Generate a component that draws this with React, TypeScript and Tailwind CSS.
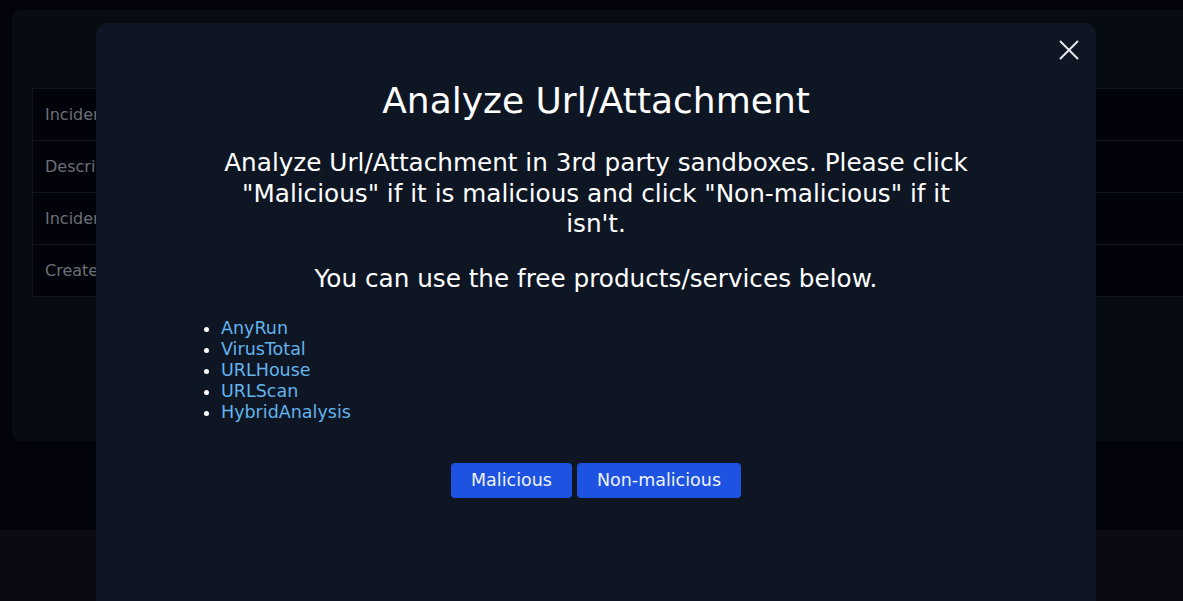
import { X } from "lucide-react";

const rows = ["Incident Name", "Description", "Incident Type", "Created Date"];
const links = ["AnyRun", "VirusTotal", "URLHouse", "URLScan", "HybridAnalysis"];

export default function App() {
    return (
        <div
            className="relative h-[601px] w-full overflow-hidden bg-[#03040b]"
            style={{ fontFamily: '"DejaVu Sans", sans-serif' }}
        >
            {/* page behind the modal */}
            <div className="flex h-full flex-col">
                <div className="pt-[10px]">
                    <div className="ml-3 -mr-4 h-[431px] rounded-lg bg-[#070b12] pl-5 pt-[78px]">
                        <div className="border-l border-t border-[#11151d] bg-[#02030a]">
                            {rows.map((r) => (
                                <div key={r} className="flex h-[52px] items-center border-b border-[#11151d] pl-3 text-[16px] text-[#6b6f76]">
                                    {r}
                                </div>
                            ))}
                        </div>
                    </div>
                </div>
                <div className="flex-1" />
                <div className="h-[71px] bg-[#0b0a14]" />
            </div>

            {/* modal */}
            <div className="absolute left-[96px] top-[23px] h-[620px] w-[1000px] rounded-t-xl bg-[#0e1624]">
                <button className="absolute right-[10px] top-[10px] text-[#e5e7eb]">
                    <X className="h-[34px] w-[34px]" strokeWidth={1.4} />
                </button>
                <div className="flex flex-col items-center pt-[56px] text-white">
                    <h2 className="text-[36px] leading-[44px]">Analyze Url/Attachment</h2>
                    <p className="mt-[25px] w-[760px] text-center text-[24.7px] leading-[30.5px]">
                        Analyze Url/Attachment in 3rd party sandboxes. Please click "Malicious" if it is malicious and click "Non-malicious" if it isn't.
                    </p>
                    <p className="mt-[24px] text-center text-[24.7px] leading-[30.5px]">
                        You can use the free products/services below.
                    </p>
                </div>
                <ul className="mt-[24px] list-disc pl-[125px] text-[17.5px] leading-[21px] text-[#63b3ed] marker:text-white">
                    {links.map((l) => (
                        <li key={l}>
                            <a href="#">{l}</a>
                        </li>
                    ))}
                </ul>
                <div className="mt-[40px] flex justify-center gap-[5px]">
                    <button className="h-[35px] rounded bg-[#1d53e0] px-5 text-[17.5px] text-[#eef2ff]">Malicious</button>
                    <button className="h-[35px] rounded bg-[#1d53e0] px-5 text-[17.5px] text-[#eef2ff]">Non-malicious</button>
                </div>
            </div>
        </div>
    );
}
